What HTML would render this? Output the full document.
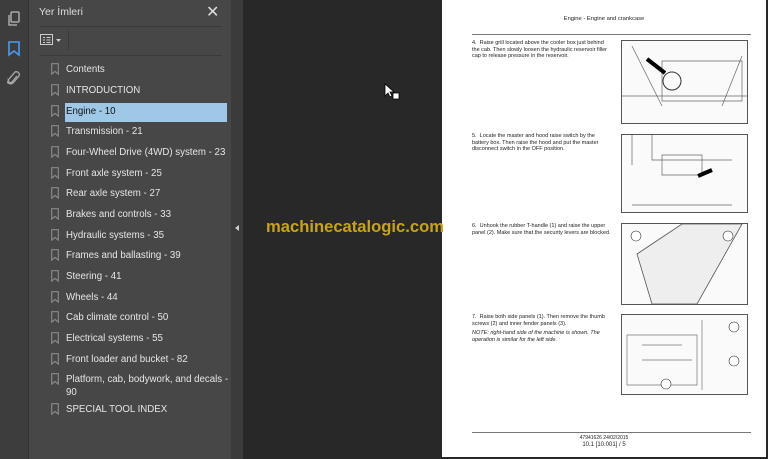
<!DOCTYPE html>
<html><head><meta charset="utf-8"><style>
*{margin:0;padding:0;box-sizing:border-box}
body{width:768px;height:459px;overflow:hidden;background:#282828;font-family:"Liberation Sans",sans-serif;position:relative}
#bar{position:absolute;left:0;top:0;width:29px;height:459px;background:#3d3d3d;border-right:1px solid #333}
#panel{position:absolute;left:29px;top:0;width:202px;height:459px;background:#474747}
#strip{position:absolute;left:231px;top:0;width:12px;height:459px;background:#3b3b3b}
.t{position:absolute;left:66px;color:#e6e6e6;font-size:9.7px;line-height:13px;white-space:nowrap}
.bm{position:absolute;left:51px;width:8px;height:12px}
#page{position:absolute;left:442px;top:0;width:324px;height:457px;background:#fff}
.p{position:absolute;font-size:5.5px;color:#222;line-height:6.6px}
.img{position:absolute;left:179px;width:127px;border:1px solid #555;background:#fafafa}
</style></head><body>
<div id="bar">
<svg style="position:absolute;left:7px;top:11px" width="14" height="16" viewBox="0 0 14 16"><rect x="4" y="1" width="8" height="10" fill="none" stroke="#bbb" stroke-width="1.3" rx="1"/><path d="M2 4v10h8" fill="none" stroke="#bbb" stroke-width="1.3"/></svg>
<svg style="position:absolute;left:8px;top:41px" width="12" height="16" viewBox="0 0 12 16"><path d="M1 1h10v13l-5-4-5 4z" fill="none" stroke="#4b9cf0" stroke-width="1.6"/></svg>
<svg style="position:absolute;left:7px;top:71px" width="14" height="16" viewBox="0 0 14 16"><path d="M10 5l-5 6a2 2 0 0 1-3-3l6-7a3 3 0 0 1 4 4l-6 7a4 4 0 0 1-6-5" fill="none" stroke="#aaa" stroke-width="1.3"/></svg>
</div>
<div id="panel">
<div style="position:absolute;left:10px;top:6px;color:#ddd;font-size:10.5px">Yer İmleri</div>
<div style="position:absolute;left:177px;top:2px;color:#ddd;font-size:16px">✕</div>
<div style="position:absolute;left:10px;top:26px;width:183px;height:1px;background:#3a3a3a"></div>
<svg style="position:absolute;left:11px;top:34px" width="24" height="12" viewBox="0 0 24 12"><rect x="0.5" y="0.5" width="12" height="10" fill="none" stroke="#ccc"/><path d="M3 3.5h2M3 6h2M3 8.5h2M6.5 3.5h4M6.5 6h4M6.5 8.5h4" stroke="#ccc"/><path d="M16 5h5l-2.5 3z" fill="#ccc"/></svg>
<div style="position:absolute;left:39px;top:30px;width:1px;height:20px;background:#3a3a3a"></div>
<div style="position:absolute;left:10px;top:55px;width:183px;height:1px;background:#3a3a3a"></div>
</div>
<div style="position:absolute;left:65px;top:103px;width:162px;height:19px;background:#9fc8e6"></div>
<div id="strip"><div style="position:absolute;left:4px;top:225px;border-right:4px solid #ccc;border-top:3px solid transparent;border-bottom:3px solid transparent"></div></div>
<div id="items"></div>
<script>
var it=[["Contents",69],["INTRODUCTION",90],["Engine - 10",111],["Transmission - 21",131],["Four-Wheel Drive (4WD) system - 23",152],["Front axle system - 25",173],["Rear axle system - 27",193],["Brakes and controls - 33",214],["Hydraulic systems - 35",235],["Frames and ballasting - 39",255],["Steering - 41",276],["Wheels - 44",297],["Cab climate control - 50",317],["Electrical systems - 55",338],["Front loader and bucket - 82",359],["Platform, cab, bodywork, and decals -<br>90",386],["SPECIAL TOOL INDEX",409]];
var h="";it.forEach(function(a,i){var y=a[1];var two=a[0].indexOf("<br>")>0;var ty=two?y-13:y-6;h+='<div class="t" style="top:'+ty+'px;'+(i==2?'color:#111':'')+'">'+a[0]+'</div><svg class="bm" style="top:'+(two?ty:y-6)+'px" viewBox="0 0 8 12"><path d="M.7.7h6.6v10.4L4 8.4.7 11.1z" fill="none" stroke="#888" stroke-width="1.2"/></svg>';});
document.getElementById("items").innerHTML=h;
</script>
<svg style="position:absolute;left:384px;top:83px" width="16" height="18" viewBox="0 0 16 18"><path d="M1 1v12l3-3 2 4 2-1-2-4h4z" fill="#fff" stroke="#000" stroke-width=".8"/><rect x="9" y="10" width="6" height="6" fill="#fff" stroke="#000" stroke-width=".8"/></svg>
<div id="page">
<div class="p" style="left:0;width:324px;top:16px;text-align:center;font-size:5.8px">Engine - Engine and crankcase</div>
<div style="position:absolute;left:30px;top:34px;width:279px;height:1px;background:#777"></div>
<div class="p" style="left:30px;top:40px;width:140px">4.&nbsp; Raise grill located above the cooler box just behind the cab. Then slowly loosen the hydraulic reservoir filler cap to release pressure in the reservoir.</div>
<div class="p" style="left:30px;top:133px;width:140px">5.&nbsp; Locate the master and hood raise switch by the battery box. Then raise the hood and put the master disconnect switch in the OFF position.</div>
<div class="p" style="left:30px;top:223px;width:140px">6.&nbsp; Unhook the rubber T-handle (1) and raise the upper panel (2). Make sure that the security levers are blocked.</div>
<div class="p" style="left:30px;top:314px;width:140px">7.&nbsp; Raise both side panels (1). Then remove the thumb screws (2) and inner fender panels (3).</div>
<div class="p" style="left:30px;top:330px;width:140px;font-style:italic">NOTE: right-hand side of the machine is shown. The operation is similar for the left side.</div>
<div class="img" style="top:40px;height:84px"><svg width="125" height="82"><path d="M10 5l30 60M120 15l-20 50M40 20h80v40H40zM0 55h125" stroke="#666" fill="none" stroke-width=".7"/><circle cx="50" cy="40" r="9" stroke="#333" fill="none"/><path d="M25 18l18 14" stroke="#000" stroke-width="4"/></svg></div>
<div class="img" style="top:134px;height:79px"><svg width="125" height="77"><path d="M10 0v30M30 0v25h80M40 20h40v20H40zM10 70h100" stroke="#666" fill="none" stroke-width=".7"/><path d="M90 35l-14 6" stroke="#000" stroke-width="4"/></svg></div>
<div class="img" style="top:223px;height:82px"><svg width="125" height="80"><path d="M15 30l45-30h60l-45 80H30z" stroke="#555" fill="#eee" stroke-width=".8"/><circle cx="14" cy="12" r="5" fill="#fff" stroke="#333" stroke-width=".6"/><circle cx="106" cy="12" r="5" fill="#fff" stroke="#333" stroke-width=".6"/></svg></div>
<div class="img" style="top:314px;height:81px"><svg width="125" height="79"><path d="M5 20h70v50H5zM80 5v70M20 30h40M20 45h50" stroke="#777" fill="none" stroke-width=".7"/><circle cx="112" cy="12" r="5" fill="#fff" stroke="#333" stroke-width=".6"/><circle cx="112" cy="46" r="5" fill="#fff" stroke="#333" stroke-width=".6"/><circle cx="44" cy="69" r="5" fill="#fff" stroke="#333" stroke-width=".6"/></svg></div>
<div style="position:absolute;left:30px;top:432px;width:279px;height:1px;background:#777"></div>
<div class="p" style="left:0;width:324px;top:435px;text-align:center;font-size:5px">47941626 24/02/2015</div>
<div class="p" style="left:0;width:324px;top:442px;text-align:center;font-size:6px">10.1 [10.001] / 5</div>
</div>
<div style="position:absolute;left:266px;top:217px;color:#c9a412;font-size:16.6px;font-weight:bold;white-space:nowrap;z-index:5">machinecatalogic.com</div>
</body></html>
